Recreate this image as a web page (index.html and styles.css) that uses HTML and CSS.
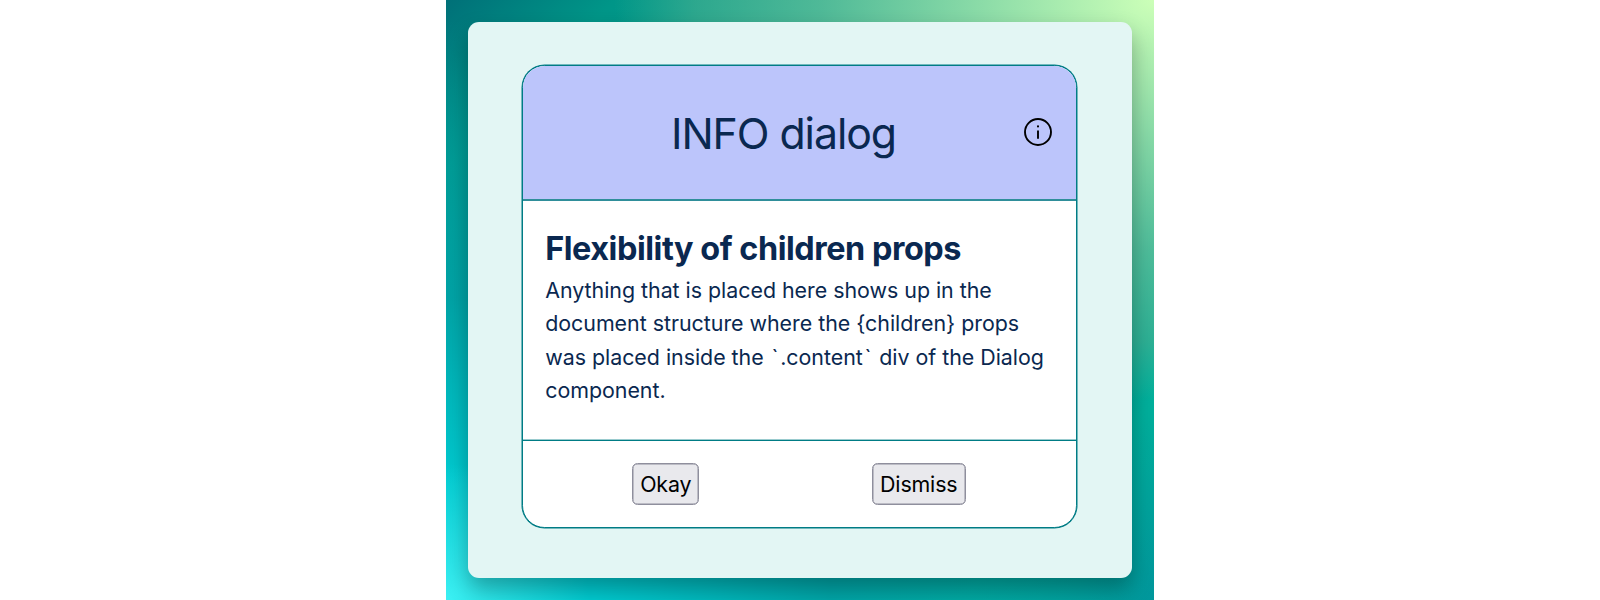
FILE: index.html
```html
<!DOCTYPE html>
<html lang="en">
<head>
<meta charset="utf-8">
<title>INFO dialog</title>
<link rel="stylesheet" href="styles.css">
</head>
<body>
<main class="backdrop">
  <div class="panel">
    <section class="dialog">
      <header class="dialog-header">
        <h1 class="title">INFO dialog</h1>
        <svg class="info-icon" viewBox="0 0 28 28" aria-hidden="true">
          <circle cx="14" cy="14" r="13" fill="none" stroke="#000" stroke-width="1.9"/>
          <circle cx="14" cy="8.4" r="1.05"/>
          <path d="M14 12.4v8.4" stroke="#000" stroke-width="1.9"/>
        </svg>
      </header>
      <div class="content">
        <h2 class="subtitle">Flexibility of children props</h2>
        <p class="copy">
          <span class="line">Anything that is placed here shows up in the</span>
          <span class="line">document structure where the {children} props</span>
          <span class="line">was placed inside the <span class="tick">`</span>.content<span class="tick">`</span> div of the Dialog</span>
          <span class="line">component.</span>
        </p>
      </div>
      <footer class="actions">
        <button class="btn btn-okay">Okay</button>
        <button class="btn btn-dismiss">Dismiss</button>
      </footer>
    </section>
  </div>
</main>
</body>
</html>
```
FILE: styles.css
```css
* { box-sizing: border-box; }
body { margin: 0; background: #fff; font-family: Inter, sans-serif; color: #0a2850; }
.backdrop {
  width: 708px; height: 600px; margin: 0 auto; padding: 22.3px 22px;
  background:
    radial-gradient(540px 402px at 100% 0, #ccffb8, rgba(105,195,155,.75) 62%, rgba(75,178,145,.6) 85%, rgba(60,170,145,0) 100%),
    radial-gradient(144px 137px at 0 100%, #3cf0f3, rgba(0,203,208,0)),
    radial-gradient(740px 580px at 0 100%, #00cbd1 20%, rgba(0,165,171,.85) 52%, rgba(0,140,145,0)),
    linear-gradient(135deg, #007078 0%, #009688 13%, #00b09c 85%, #00959a 100%);
}
.panel {
  width: 664px; height: 555.7px; padding: 42.7px 55px 0 54px; border-radius: 11px;
  background: #e3f6f4; box-shadow: 0 11px 22px rgba(0,0,0,.3);
}
.dialog {
  display: flex; flex-direction: column; height: 463px;
  border: 1px solid #007c85; border-radius: 22.5px; overflow: hidden; background: #fff;
  box-shadow: 0 0 0 .5px #007c85;
}
.dialog-header {
  display: flex; align-items: center; height: 135px; padding-right: 24px;
  background: #bcc5fb; border-bottom: 2px solid #2f8e9a;
}
.title { flex: 1; margin: 0 0 0 20px; padding-top: 3px; text-align: center; font-size: 42.8px; font-weight: 400; letter-spacing: -1.05px; line-height: 66px; }
.info-icon { width: 28px; height: 28px; margin-top: -1px; }
.content { flex: 1; padding: 23px 22.2px 0; }
.subtitle { margin: 0; font-size: 32.4px; line-height: 50px; font-weight: 700; letter-spacing: -.45px; white-space: nowrap; }
.copy { margin: 0; font-size: 21.4px; line-height: 33.4px; letter-spacing: -.02px; white-space: nowrap; }
.line { display: block; }
.tick { display: inline-block; padding: 0 1.8px; }
.actions {
  display: flex; justify-content: space-around; align-items: center; height: 87px; padding: 0 24px 0 23px;
  border-top: 1px solid #007c85; box-shadow: 0 -1px rgba(0,124,133,.4);
}
.btn {
  height: 42px; padding: 0; border: 1px solid #8f8f9d; border-radius: 5.5px; background: #e9e9ed;
  box-shadow: inset 0 0 0 .5px #8f8f9d;
  font: 21.4px/40px Inter, sans-serif; letter-spacing: -.15px; color: #000;
}
.btn-okay { width: 67px; }
.btn-dismiss { width: 94px; }
```
